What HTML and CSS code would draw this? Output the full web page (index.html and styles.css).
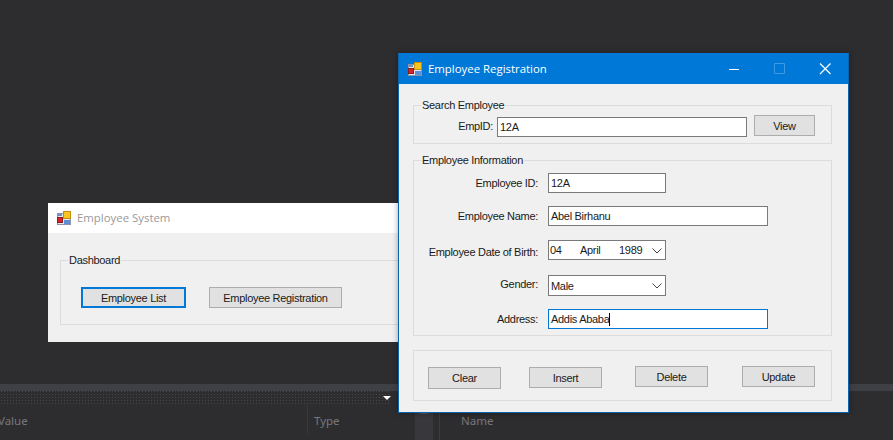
FILE: index.html
```html
<!DOCTYPE html>
<html lang="en">
<head>
    <meta charset="UTF-8">
    <meta name="viewport" content="width=device-width, initial-scale=1.0">
    <title>Employee Registration</title>
    <link rel="stylesheet" href="styles.css">
</head>
<body>
    <div class="desktop">
        <div class="bottom-panel">
            <div class="panel-bar"></div>
            <div class="panel-grip"><span class="grip-arrow"></span></div>
            <div class="panel-head">
                <span class="col-value">Value</span>
                <span class="col-type">Type</span>
                <span class="panel-scroll"><span class="scroll-arrow"></span></span>
                <span class="col-name">Name</span>
            </div>
        </div>

        <div class="window dash-window">
            <div class="titlebar dash-title">
                <svg class="app-icon" viewBox="0 0 14 14">
                    <rect x="0.5" y="2.500" width="13" height="11" fill="#e4e9f0" stroke="#8a94a6"/>
                    <rect x="1" y="3" width="4" height="2" fill="#6d8fc4"/>
                    <rect x="6.500" y="0.500" width="7" height="7" fill="#f6c51e" stroke="#c98a10"/>
                    <rect x="0.500" y="6.500" width="5" height="5" fill="#d8232a" stroke="#8f1a1a"/>
                    <rect x="7" y="9" width="6" height="4" fill="#5b8fd8"/>
                </svg>
                <span>Employee System</span>
            </div>
            <div class="window-body">
                <fieldset class="group dash-group">
                    <legend>Dashboard</legend>
                    <div class="dash-row">
                        <button class="btn btn-focus btn-list">Employee List</button>
                        <button class="btn btn-reg">Employee Registration</button>
                    </div>
                </fieldset>
            </div>
        </div>

        <div class="window reg-window">
            <div class="titlebar reg-title">
                <svg class="app-icon" viewBox="0 0 14 14">
                    <rect x="0.5" y="2.500" width="13" height="11" fill="#e4e9f0" stroke="#8a94a6"/>
                    <rect x="1" y="3" width="4" height="2" fill="#6d8fc4"/>
                    <rect x="6.500" y="0.500" width="7" height="7" fill="#f6c51e" stroke="#c98a10"/>
                    <rect x="0.500" y="6.500" width="5" height="5" fill="#d8232a" stroke="#8f1a1a"/>
                    <rect x="7" y="9" width="6" height="4" fill="#5b8fd8"/>
                </svg>
                <span class="title-text">Employee Registration</span>
                <svg class="win-controls" width="102" height="12" viewBox="0 0 102 12">
                    <path d="M0 6.500H10" stroke="#fff" fill="none"/>
                    <path d="M45.500 0.500h10v10h-10z" stroke="#3d9be6" fill="none"/>
                    <path d="M91 0.500L101.500 11M101.500 0.500L91 11" stroke="#fff" stroke-width="1.2" fill="none"/>
                </svg>
            </div>
            <div class="window-body reg-body">
                <fieldset class="group search-group">
                    <legend>Search Employee</legend>
                    <div class="search-row">
                        <label class="search-label">EmpID:</label>
                        <div class="field search-field">12A</div>
                        <button class="btn btn-view">View</button>
                    </div>
                </fieldset>

                <fieldset class="group info-group">
                    <legend>Employee Information</legend>
                    <div class="form-grid">
                        <label>Employee ID:</label>
                        <div class="field short">12A</div>
                        <label>Employee Name:</label>
                        <div class="field wide">Abel Birhanu</div>
                        <label class="label-date">Employee Date of Birth:</label>
                        <div class="field short date-field">
                            <span>04</span><span>April</span><span>1989</span>
                            <svg class="chevron" width="10" height="6" viewBox="0 0 10 6"><path d="M0.500 0.500L5 5L9.500 0.500" stroke="#444" fill="none"/></svg>
                        </div>
                        <label class="label-gender">Gender:</label>
                        <div class="field short select-field">
                            <span>Male</span>
                            <svg class="chevron" width="10" height="6" viewBox="0 0 10 6"><path d="M0.500 0.500L5 5L9.500 0.500" stroke="#444" fill="none"/></svg>
                        </div>
                        <label>Address:</label>
                        <div class="field wide active">Addis Ababa<span class="caret"></span></div>
                    </div>
                </fieldset>

                <fieldset class="group action-group">
                    <button class="btn btn-action btn-clear">Clear</button>
                    <button class="btn btn-action btn-insert">Insert</button>
                    <button class="btn btn-action btn-delete">Delete</button>
                    <button class="btn btn-action btn-update">Update</button>
                </fieldset>
            </div>
        </div>
    </div>
</body>
</html>
```
FILE: styles.css
```css
* {
    box-sizing: border-box;
}

html, body {
    margin: 0;
    padding: 0;
}

body {
    font-family: "Liberation Sans", Arial, sans-serif;
    font-size: 11px;
    letter-spacing: -0.3px;
    color: #1a1a1a;
    background-color: #2d2d30;
}

.desktop {
    position: relative;
    width: 893px;
    height: 440px;
    overflow: hidden;
    display: flex;
    flex-direction: column;
    justify-content: flex-end;
}

/* dark panel behind the windows */
.bottom-panel {
    height: 56px;
}

.panel-bar {
    height: 7px;
    background-color: #3f3f46;
}

.panel-grip {
    height: 14px;
    display: flex;
    justify-content: flex-end;
    align-items: center;
    padding-right: 502px;
    background-image: radial-gradient(#46464c 0.6px, transparent 0.8px);
    background-size: 3px 3px;
    background-position: 0 2px;
    background-clip: content-box;
}

.grip-arrow {
    width: 0;
    height: 0;
    border-left: 4px solid transparent;
    border-right: 4px solid transparent;
    border-top: 4px solid #fff;
}

.panel-head {
    height: 35px;
    display: flex;
    align-items: flex-start;
    color: #77777c;
    font-family: "Noto Sans", sans-serif;
    font-size: 11.5px;
    letter-spacing: 0;
}

.col-value {
    margin-left: -2px;
    width: 310px;
    padding-top: 8px;
    border-right: 1px solid #38383b;
    height: 30px;
}

.col-type {
    width: 107px;
    padding: 8px 0 0 6px;
}

.panel-scroll {
    width: 18px;
    height: 35px;
    background-color: #38383c;
    display: flex;
    justify-content: center;
    padding-top: 5px;
}

.scroll-arrow {
    width: 0;
    height: 0;
    border-left: 5px solid transparent;
    border-right: 5px solid transparent;
    border-bottom: 4px solid #55555b;
}

.col-name {
    margin-left: 6px;
    padding: 8px 0 0 21px;
    border-left: 1px solid #3c3c40;
    height: 35px;
}

/* windows */
.window {
    position: absolute;
    background-color: #f0f0f0;
}

.dash-window {
    left: 48px;
    top: 203px;
    width: 352px;
    height: 139px;
}

.reg-window {
    left: 398px;
    top: 53px;
    width: 451px;
    height: 360px;
    border: 1px solid #0a64ad;
    border-top-color: #0078d7;
    box-shadow: 0 0 6px rgba(0, 0, 0, 0.35);
}

.titlebar {
    display: flex;
    align-items: center;
    height: 30px;
    padding: 0 0 1px 9px;
    gap: 6px;
    font-family: "Open Sans", sans-serif;
    font-size: 11.4px;
    letter-spacing: 0;
}

.dash-title {
    background-color: #fff;
    color: #99999d;
}

.reg-title {
    background-color: #0078d7;
    color: #fff;
}

.app-icon {
    width: 14px;
    height: 14px;
}

.title-text {
    flex: 1;
}

.win-controls {
    margin-right: 17px;
}

.window-body {
    padding: 20px 12px 0;
}

.reg-body {
    padding: 14px 16px 0 14px;
}

.group {
    position: relative;
    margin: 0;
    padding: 0;
    border: 1px solid #dcdcdc;
    min-width: 0;
}

.group legend {
    margin-left: 7px;
    padding: 0 1px;
    line-height: 14px;
}

.dash-group {
    width: 400px;
    height: 72px;
}

.dash-row {
    display: flex;
    padding: 20px 0 0 20px;
    gap: 23px;
}

.search-group {
    height: 46px;
}

.search-row {
    display: flex;
    align-items: flex-start;
    padding-top: 3px;
}

.search-label {
    width: 79px;
    margin: 5px 4px 0 0;
    text-align: right;
}

.info-group {
    margin-top: 9px;
    height: 183px;
    padding-top: 6px;
}

.action-group {
    margin-top: 14px;
    height: 51px;
}

.form-grid {
    display: grid;
    grid-template-columns: 124px 1fr;
    grid-template-rows: 33px 34px 35px 34px 20px;
    column-gap: 10px;
}

.form-grid label {
    text-align: right;
    padding-top: 4px;
    white-space: nowrap;
}

.form-grid .label-date {
    padding-top: 6px;
}

.form-grid .label-gender {
    padding-top: 3px;
}

.field {
    height: 20px;
    background-color: #fff;
    border: 1px solid #7a7a7a;
    padding: 0 2px;
    line-height: 18px;
    white-space: nowrap;
}

.short {
    width: 118px;
}

.wide {
    width: 220px;
}

.search-field {
    width: 250px;
    margin-top: 2px;
}

.date-field,
.select-field {
    position: relative;
}

.date-field {
    display: grid;
    grid-template-columns: 30px 39px auto;
    padding-left: 1px;
}

.select-field {
    display: flex;
    align-items: center;
    height: 21px;
}

.chevron {
    position: absolute;
    right: 3px;
    top: 7px;
}

.active {
    border-color: #0078d7;
}

.caret {
    display: inline-block;
    width: 1px;
    height: 13px;
    background-color: #000;
    vertical-align: -3px;
}

/* buttons */
.btn {
    font-family: inherit;
    font-size: 11px;
    letter-spacing: inherit;
    color: #1a1a1a;
    height: 21px;
    padding: 0;
    background-color: #e1e1e1;
    border: 1px solid #adadad;
}

.btn-focus {
    border: 2px solid #0078d7;
}

.btn-list {
    width: 105px;
}

.btn-reg {
    width: 133px;
}

.btn-view {
    width: 61px;
    margin-left: 7px;
}

.btn-action {
    position: absolute;
    width: 73px;
}

.btn-clear {
    left: 14px;
    top: 16px;
    height: 22px;
}

.btn-insert {
    left: 115px;
    top: 16px;
}

.btn-delete {
    left: 221px;
    top: 15px;
}

.btn-update {
    left: 328px;
    top: 15px;
}
```
